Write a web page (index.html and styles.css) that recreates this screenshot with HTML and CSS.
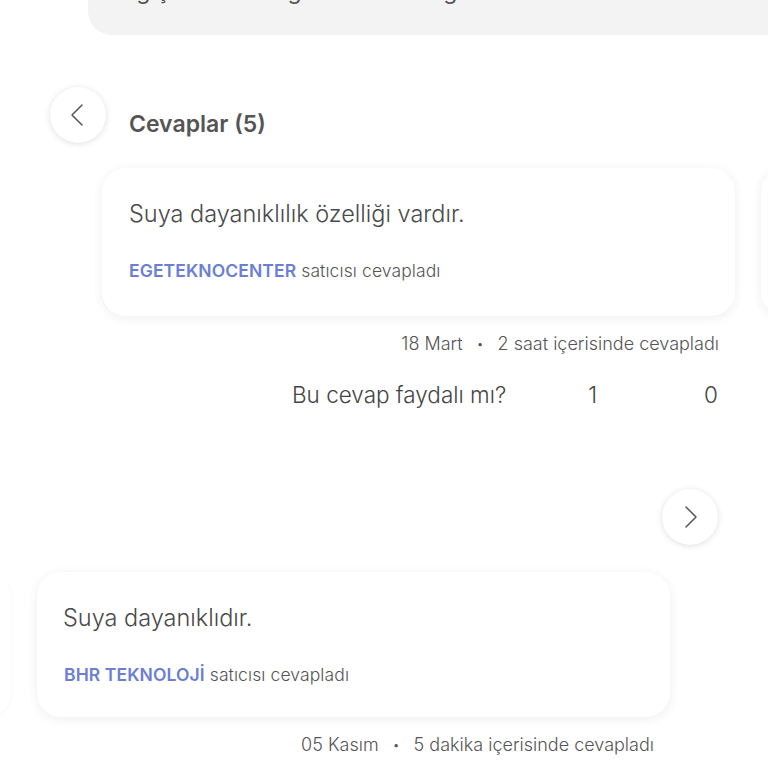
FILE: index.html
```html
<!DOCTYPE html>
<html lang="tr">
<head>
  <meta charset="UTF-8">
  <title>Cevaplar</title>
  <link rel="stylesheet" href="styles.css">
</head>
<body>
  <div class="question">
    <p>Bilgiçlik ve özelliği hakkında bilgi verir misiniz</p>
  </div>

  <div class="answers-head">
    <button class="nav-btn" aria-label="Geri">
      <svg width="24" height="24" viewBox="0 0 24 24"><path d="M16 2 L6 12 L16 22" fill="none" stroke="#555" stroke-width="1.5" stroke-linecap="round" stroke-linejoin="round"/></svg>
    </button>
    <h2>Cevaplar (5)</h2>
  </div>

  <!-- first answer slider -->
  <div class="slider slider-first">
    <div class="track">
      <div class="card">
        <p class="answer">Suya dayanıklılık özelliği vardır.</p>
        <p class="seller"><span class="seller-name">EGETEKNOCENTER</span> satıcısı cevapladı</p>
      </div>
      <div class="card"></div>
    </div>
  </div>
  <p class="meta meta-first">18 Mart <span class="dot">•</span> 2 saat içerisinde cevapladı</p>

  <div class="helpful">
    <span class="helpful-q">Bu cevap faydalı mı?</span>
    <span class="vote vote-up">1</span>
    <span class="vote vote-down">0</span>
  </div>

  <div class="next-row">
    <button class="nav-btn" aria-label="İleri">
      <svg width="24" height="24" viewBox="0 0 24 24"><path d="M8 2 L18 12 L8 22" fill="none" stroke="#555" stroke-width="1.5" stroke-linecap="round" stroke-linejoin="round"/></svg>
    </button>
  </div>

  <!-- second answer slider -->
  <div class="slider slider-second">
    <div class="track">
      <div class="card card-prev"></div>
      <div class="card">
        <p class="answer">Suya dayanıklıdır.</p>
        <p class="seller"><span class="seller-name">BHR TEKNOLOJİ</span> satıcısı cevapladı</p>
      </div>
    </div>
  </div>
  <p class="meta meta-second">05 Kasım <span class="dot">•</span> 5 dakika içerisinde cevapladı</p>
</body>
</html>
```

FILE: styles.css
```css
body {
  margin: 0;
  background: #fff;
  font-family: Inter, "Noto Sans", sans-serif;
  color: #4a4a4a;
  overflow: hidden;
}
p {
  margin: 0;
}
.question {
  margin-left: 88px;
  height: 35px;
  background: #f3f3f3;
  border-radius: 0 0 0 24px;
  overflow: hidden;
}
.question p {
  margin-top: -23px;
  padding-left: 22px;
  font-size: 23px;
  line-height: 28px;
  color: #555;
  white-space: nowrap;
}
.answers-head {
  display: flex;
  align-items: flex-start;
  margin-top: 52px;
  padding-left: 50px;
}
.nav-btn {
  width: 56px;
  height: 56px;
  border-radius: 50%;
  border: none;
  background: #fff;
  box-shadow: 0 1px 6px rgba(0,0,0,0.13);
  display: flex;
  align-items: center;
  justify-content: center;
  padding: 0;
  cursor: pointer;
}
.answers-head h2 {
  margin: 22px 0 0 23px;
  font-size: 23px;
  line-height: 30px;
  font-weight: 600;
  color: #555;
}
.slider {
  overflow: hidden;
  padding: 0 0 12px;
}
.slider-first {
  margin-top: 13px;
  padding-top: 12px;
}
.slider-second {
  margin-top: 15px;
  padding-top: 12px;
}
.track {
  display: flex;
  gap: 26px;
}
.slider-first .track {
  margin-left: 102px;
}
.slider-second .track {
  margin-left: -622px;
}
.card {
  flex: 0 0 auto;
  width: 633px;
  height: 148px;
  box-sizing: border-box;
  padding: 31px 27px 0;
  background: #fff;
  border-radius: 24px;
  box-shadow: 0 2px 12px rgba(0,0,0,0.07);
}
.slider-second .card {
  height: 145px;
}
.card-prev {
  box-shadow: 0 1px 4px rgba(0,0,0,0.04);
}
.answer {
  font-size: 23.5px;
  line-height: 30px;
  font-weight: 300;
  color: #4a4a4a;
}
.slider-second .answer {
  margin-left: -1px;
}
.seller {
  margin-top: 32px;
  font-size: 17.5px;
  line-height: 20px;
  font-weight: 300;
  color: #555;
  letter-spacing: 0.1px;
}
.seller-name {
  color: #6a7ed4;
  font-weight: 600;
}
.meta {
  text-align: right;
  font-size: 18px;
  line-height: 20px;
  font-weight: 300;
  color: #555;
}
.meta .dot {
  margin: 0 9px;
  font-size: 12px;
  vertical-align: 2px;
}
.meta-first {
  margin-top: 6px;
  padding-right: 49px;
}
.meta-second {
  margin-top: 6px;
  padding-right: 114px;
}
.helpful {
  display: flex;
  justify-content: flex-end;
  align-items: center;
  margin-top: 28px;
  padding-right: 50px;
  font-size: 22.5px;
  line-height: 26px;
  font-weight: 300;
  color: #444;
}
.vote-up {
  margin-left: 82px;
}
.vote-down {
  margin-left: 107px;
}
.next-row {
  display: flex;
  justify-content: flex-end;
  margin-top: 81px;
  padding-right: 50px;
}
```
